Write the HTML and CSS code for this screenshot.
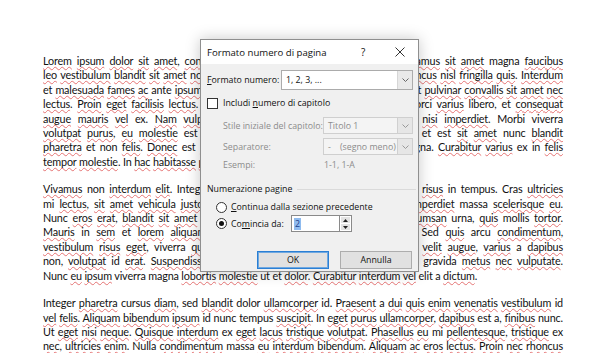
FILE: index.html
```html
<!DOCTYPE html>
<html lang="it">
<head>
    <meta charset="UTF-8">
    <title>Formato numero di pagina</title>
    <link rel="stylesheet" href="styles.css">
</head>
<body>
    <div class="doc">
        <p>
            <span class="line"><u>Lorem</u> <u>ipsum</u> <u>dolor</u> <u>sit</u> <u>amet</u>, <u>consectetur</u> <u>adipiscing</u> <u>elit</u>. <u>Nullam</u> at <u>tortor</u>. <u>Vivamus</u> <u>sit</u> <u>amet</u> magna <u>faucibus</u></span>
            <span class="line"><u>leo</u> <u>vestibulum</u> <u>blandit</u> <u>sit</u> <u>amet</u> <u>nonummy</u>. <u>Aenean</u> <u>quis</u> est ac <u>odio</u> <u>pharetra</u> <u>rhoncus</u> <u>nisl</u> <u>fringilla</u> <u>quis</u>. <u>Interdum</u></span>
            <span class="line">et <u>malesuada</u> <u>fames</u> <u>ac</u> ante <u>ipsum</u> <u>primis</u> in <u>faucibus</u>. Nam <u>tempor</u> <u>lorem</u> mollis at <u>pulvinar</u> <u>convallis</u> <u>sit</u> <u>amet</u> <u>nec</u></span>
            <span class="line"><u>lectus</u>. <u>Proin</u> <u>eget</u> <u>facilisis</u> <u>lectus</u>. Nulla <u>facilisi</u>. Sed ac <u>augue</u> ut ante <u>sodales</u> orci <u>varius</u> libero, et <u>consequat</u></span>
            <span class="line"><u>augue</u> <u>mauris</u> <u>vel</u> ex. <u>Nam</u> <u>vulputate</u> <u>pellentesque</u> <u>tortor</u>, <u>quis</u> <u>luctus</u> <u>risus</u> <u>nisi</u> <u>imperdiet</u>. Morbi viverra</span>
            <span class="line"><u>volutpat</u> <u>purus</u>, <u>eu</u> <u>molestie</u> est <u>facilisis</u>, non <u>dignissim</u> <u>sapien</u> <u>lectus</u>. <u>Morbi</u> et est <u>sit</u> <u>amet</u> nunc <u>blandit</u></span>
            <span class="line"><u>pharetra</u> et non <u>felis</u>. <u>Donec</u> est <u>ipsum</u>, a <u>fermentum</u> erat <u>sodales</u> vel <u>quis</u> magna. <u>Curabitur</u> <u>varius</u> ex in <u>felis</u></span>
            <span class="line last"><u>tempor</u> <u>molestie</u>. In <u>hac</u> <u>habitasse</u> <u>platea</u> <u>dictumst</u>.</span>
        </p>
        <p>
            <span class="line"><u>Vivamus</u> non <u>interdum</u> <u>elit</u>. Integer ut <u>lorem</u> <u>eget</u> arcu <u>finibus</u> <u>fermentum</u> non <u>risus</u> in tempus. Cras <u>ultricies</u></span>
            <span class="line">mi <u>lectus</u>, <u>sit</u> <u>amet</u> <u>vehicula</u> <u>justo</u> <u>eu</u>. <u>Aliquam</u> erat <u>volutpat</u>. Etiam ac <u>nibh</u> <u>imperdiet</u> massa <u>scelerisque</u> <u>eu</u>.</span>
            <span class="line">Nunc <u>eros</u> <u>erat</u>, <u>blandit</u> <u>sit</u> <u>amet</u> dolor. <u>Phasellus</u> <u>eget</u> <u>felis</u> et <u>turpis</u> nunc <u>accumsan</u> urna, <u>quis</u> mollis <u>tortor</u>.</span>
            <span class="line"><u>Mauris</u> in <u>sem</u> et <u>lorem</u> <u>aliquam</u> <u>scelerisque</u>. <u>Praesent</u> at nulla, <u>commodo</u>. Sed <u>quis</u> arcu <u>condimentum</u>,</span>
            <span class="line"><u>vestibulum</u> <u>risus</u> <u>eget</u>, viverra <u>quam</u>. <u>Aenean</u> <u>tincidunt</u> <u>ligula</u> sed porta. Cras <u>velit</u> <u>augue</u>, <u>varius</u> a <u>dapibus</u></span>
            <span class="line">non, <u>volutpat</u> id <u>erat</u>. <u>Suspendisse</u> <u>potenti</u>. <u>Nullam</u> vitae <u>lacus</u> <u>sit</u> <u>amet</u> <u>lectus</u> gravida <u>metus</u> <u>nec</u> <u>vulputate</u>.</span>
            <span class="line last">Nunc <u>eu</u> <u>ipsum</u> viverra magna <u>lobortis</u> <u>molestie</u> ut et <u>dolor</u>. <u>Curabitur</u> <u>interdum</u> <u>vel</u> elit a <u>dictum</u>.</span>
        </p>
        <p>
            <span class="line">Integer <u>pharetra</u> cursus <u>diam</u>, sed <u>blandit</u> dolor <u>ullamcorper</u> id. <u>Praesent</u> a <u>dui</u> <u>quis</u> <u>enim</u> <u>venenatis</u> <u>vestibulum</u> id</span>
            <span class="line"><u>vel</u> <u>felis</u>. <u>Aliquam</u> <u>bibendum</u> <u>ipsum</u> id nunc tempus <u>suscipit</u>. In <u>eget</u> <u>purus</u> <u>ullamcorper</u>, <u>dapibus</u> est a, <u>finibus</u> nunc.</span>
            <span class="line">Ut <u>eget</u> <u>nisi</u> <u>neque</u>. <u>Quisque</u> <u>interdum</u> ex <u>eget</u> <u>lacus</u> <u>tristique</u> <u>volutpat</u>. <u>Phasellus</u> <u>eu</u> mi <u>pellentesque</u>, <u>tristique</u> ex</span>
            <span class="line"><u>nec</u>, <u>ultricies</u> <u>enim</u>. Nulla <u>condimentum</u> massa <u>eu</u> <u>interdum</u> <u>bibendum</u>. <u>Aliquam</u> <u>ac</u> <u>eros</u> <u>lectus</u>. <u>Proin</u> <u>nec</u> <u>rhoncus</u></span>
        </p>
    </div>

    <div class="dialog">
        <div class="titlebar">
            <span class="title">Formato numero di pagina</span>
            <span class="help">?</span>
            <span class="close">
                <svg width="10" height="10" viewBox="0 0 10 10"><path d="M0.5 0.5L9.5 9.5M9.5 0.5L0.5 9.5" stroke="#333" stroke-width="1"/></svg>
            </span>
        </div>
        <div class="dlg-body">
            <div class="row row-format">
                <span class="label"><span class="acc">F</span>ormato numero:</span>
                <div class="select wide">
                    <span class="value">1, 2, 3, ...</span>
                    <span class="arrow"><svg width="7" height="4" viewBox="0 0 7 4"><path d="M0.5 0.5L3.5 3.5L6.5 0.5" fill="none" stroke="#666"/></svg></span>
                </div>
            </div>
            <div class="row row-check">
                <span class="checkbox"></span>
                <span>Includi <span class="acc">n</span>umero di capitolo</span>
            </div>
            <div class="row row-sub row-style">
                <span class="label">Stile iniziale del capitolo:</span>
                <div class="select disabled">
                    <span class="value">Titolo 1</span>
                    <span class="arrow"><svg width="7" height="4" viewBox="0 0 7 4"><path d="M0.5 0.5L3.5 3.5L6.5 0.5" fill="none" stroke="#999"/></svg></span>
                </div>
            </div>
            <div class="row row-sub row-sep">
                <span class="label">Separatore:</span>
                <div class="select disabled">
                    <span class="value">-&nbsp;&nbsp;&nbsp;&nbsp;(segno meno)</span>
                    <span class="arrow"><svg width="7" height="4" viewBox="0 0 7 4"><path d="M0.5 0.5L3.5 3.5L6.5 0.5" fill="none" stroke="#999"/></svg></span>
                </div>
            </div>
            <div class="row row-sub row-ex">
                <span class="label">Esempi:</span>
                <span class="example">1-1, 1-A</span>
            </div>
            <div class="row group-head">
                <span>Numerazione pagine</span>
                <span class="rule"></span>
            </div>
            <div class="row row-radio">
                <span class="radio"></span>
                <span><span class="acc">C</span>ontinua dalla sezione precedente</span>
            </div>
            <div class="row row-radio row-start">
                <span class="radio checked"></span>
                <span class="label-start">Co<span class="acc">m</span>incia da:</span>
                <div class="spin">
                    <span class="spin-input"><span class="selected">2</span></span>
                    <span class="spin-btns">
                        <span class="spin-btn"><svg width="5" height="3" viewBox="0 0 5 3"><path d="M0 3L2.5 0L5 3Z" fill="#222"/></svg></span>
                        <span class="spin-btn"><svg width="5" height="3" viewBox="0 0 5 3"><path d="M0 0L2.5 3L5 0Z" fill="#222"/></svg></span>
                    </span>
                </div>
            </div>
            <div class="buttons">
                <button class="btn default">OK</button>
                <button class="btn">Annulla</button>
            </div>
        </div>
    </div>
</body>
</html>
```

FILE: styles.css
```css
body {
    margin: 0;
    background: #fff;
    font-family: Lato, "Liberation Sans", sans-serif;
}

/* documento */
.doc {
    width: 520px;
    padding: 54px 0 0 43px;
    font-size: 10.8px;
    letter-spacing: -0.15px;
    line-height: 14.4px;
    color: #111;
}

.doc p {
    margin: 0 0 13px;
}

.line {
    display: block;
    text-align: justify;
    text-align-last: justify;
    word-spacing: -1px;
}

.line.last {
    text-align-last: left;
    word-spacing: 0;
}

.doc u {
    text-decoration: underline wavy #e57373;
    text-decoration-thickness: 1px;
    text-underline-offset: 1px;
    text-decoration-skip-ink: none;
}

/* finestra di dialogo */
.dialog {
    position: absolute;
    left: 200px;
    top: 39px;
    width: 219px;
    height: 233px;
    box-sizing: border-box;
    border: 1px solid #8f8f8f;
    background: #f0f0f0;
    box-shadow: 0 0 14px rgba(0, 0, 0, 0.22);
    font-family: "Open Sans", "Noto Sans", sans-serif;
    font-size: 8.8px;
    color: #111;
    white-space: nowrap;
}

.titlebar {
    height: 24px;
    background: #fff;
    display: flex;
    align-items: center;
    padding-left: 6px;
}

.title {
    flex: 1;
    font-size: 9.6px;
}

.help {
    width: 12px;
    font-size: 10px;
    margin-right: 22px;
}

.close {
    display: flex;
    margin-right: 13px;
}

.dlg-body {
    padding: 6px 5px 0 6px;
}

.row {
    display: flex;
    align-items: center;
}

.label {
    flex-shrink: 0;
}

.acc {
    text-decoration: underline;
}

.row-format {
    height: 20px;
}

.row-format .label {
    width: 74px;
}

.select {
    display: flex;
    align-items: stretch;
    box-sizing: border-box;
    height: 100%;
    border: 1px solid #ababab;
    background: #fff;
}

.select.wide {
    width: 132px;
}

.select .value {
    flex: 1;
    display: flex;
    align-items: center;
    padding-left: 4px;
}

.select .arrow {
    width: 14px;
    display: flex;
    align-items: center;
    justify-content: center;
    background: #e9e9e9;
    border-left: 1px solid #d6d6d6;
}

.select.disabled {
    width: 90px;
    background: #f4f4f4;
    border-color: #cfcfcf;
    color: #8c8c8c;
}

.select.disabled .arrow {
    background: #e6e6e6;
    border-left-color: #d0d0d0;
}

.row-check {
    height: 12px;
    margin-top: 7px;
    gap: 5px;
}

.checkbox {
    width: 9px;
    height: 9px;
    border: 1px solid #333;
    background: #fff;
}

.row-sub {
    color: #8c8c8c;
}

.row-sub .label {
    width: 116px;
    box-sizing: border-box;
    padding-left: 16px;
}

.row-style {
    height: 17px;
    margin-top: 8px;
}

.row-sep {
    height: 17px;
    margin-top: 4px;
}

.row-ex {
    height: 14px;
    margin-top: 3px;
}

.example {
    padding-left: 1px;
}

.group-head {
    height: 14px;
    margin-top: 10px;
    gap: 5px;
}

.group-head .rule {
    flex: 1;
    height: 1px;
    background: #dadada;
    margin-right: -3px;
}

.row-radio {
    height: 14px;
    margin-top: 4px;
    padding-left: 9px;
    gap: 4px;
}

.radio {
    width: 9px;
    height: 9px;
    border: 1px solid #333;
    border-radius: 50%;
    background: #fff;
    display: flex;
    align-items: center;
    justify-content: center;
}

.radio.checked::after {
    content: "";
    width: 5px;
    height: 5px;
    border-radius: 50%;
    background: #111;
}

.row-start {
    height: 17px;
    margin-top: 1px;
}

.label-start {
    width: 56px;
}

.spin {
    display: flex;
    height: 17px;
}

.spin-input {
    width: 48px;
    box-sizing: border-box;
    border: 1px solid #8a8a8a;
    border-right: none;
    background: #fff;
    display: flex;
    align-items: center;
    padding-left: 2px;
}

.selected {
    background: #8fbbef;
    color: #1d3f8c;
    padding: 0 1px;
    line-height: 12px;
}

.spin-btns {
    width: 13px;
    display: flex;
    flex-direction: column;
    border: 1px solid #8a8a8a;
    box-sizing: border-box;
    background: #fff;
    padding: 1px;
    gap: 1px;
}

.spin-btn {
    flex: 1;
    background: #e3e3e3;
    display: flex;
    align-items: center;
    justify-content: center;
}

.buttons {
    display: flex;
    justify-content: flex-end;
    gap: 11px;
    margin-top: 19px;
    padding-right: 1px;
}

.btn {
    width: 72px;
    height: 18px;
    padding: 0;
    font-family: inherit;
    font-size: 8.8px;
    color: #111;
    background: #e1e1e1;
    border: 1px solid #adadad;
}

.btn.default {
    border: 1px solid #2a7fd4;
    box-shadow: inset 0 0 0 1px #6fa8e0;
}
```
